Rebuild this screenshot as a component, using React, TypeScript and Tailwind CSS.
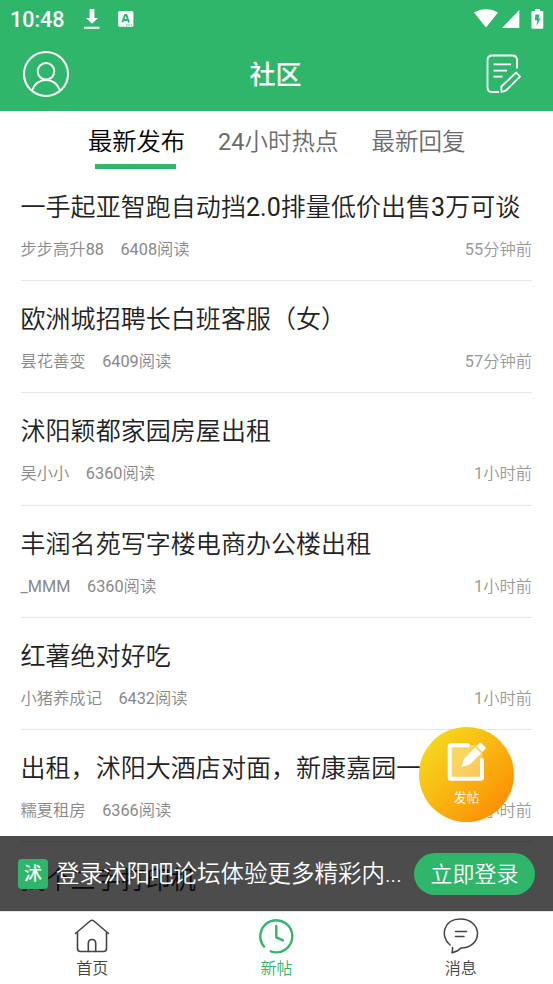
import clsx from "clsx";

const posts = [
  { title: "一手起亚智跑自动挡2.0排量低价出售3万可谈", author: "步步高升88", reads: 6408, time: "55分钟前" },
  { title: "欧洲城招聘长白班客服（女）", author: "昙花善变", reads: 6409, time: "57分钟前" },
  { title: "沭阳颖都家园房屋出租", author: "吴小小", reads: 6360, time: "1小时前" },
  { title: "丰润名苑写字楼电商办公楼出租", author: "_MMM", reads: 6360, time: "1小时前" },
  { title: "红薯绝对好吃", author: "小猪养成记", reads: 6432, time: "1小时前" },
  { title: "出租，沭阳大酒店对面，新康嘉园一楼", author: "糯夏租房", reads: 6366, time: "1小时前" },
  { title: "找个二手打印机", author: "", reads: 0, time: "" },
];

// Latin runs and digits get the regular weight, Chinese stays a bit lighter
function Mixed({ text }: { text: string }) {
  return (
    <>
      {text.split(/([\w.]+)/).map((part, i) =>
        i % 2 ? <span key={i} className="font-normal">{part}</span> : part
      )}
    </>
  );
}

function StatusBar() {
  return (
    <div className="flex h-9 items-center pl-[10px] pr-[9px] pt-[2px] text-white">
      <span className="w-[74px] pt-[2px] text-[21.5px] font-medium leading-none">10:48</span>
      <svg width="16" height="22" viewBox="0 0 16 22" fill="currentColor">
        <path d="M5.600 1h4.800v9H14l-6 5.800L2 10h3.600zM0 18.700h15.500v2H0z" />
      </svg>
      <svg className="ml-[18px]" width="16" height="16" viewBox="0 0 16 16">
        <rect x="0.2" y="0" width="15.2" height="15.8" rx="1.6" fill="currentColor" />
        <path d="M4.400 11.400 7 4h1.400L11 11.400M5.400 9h4.600" fill="none" stroke="#30b66b" strokeWidth="1.9" />
        <path d="M8 14h1.500M10.400 14h1.500M12.800 14h1.200" stroke="#30b66b" strokeWidth="1.2" />
      </svg>
      <div className="ml-auto flex items-center">
        <svg width="24" height="20" viewBox="0 0 24 20" fill="currentColor">
          <path d="M0 3.600C7-.9 17-.9 24 3.600L12 18.600z" />
        </svg>
        <svg className="ml-[4px]" width="18" height="20" viewBox="0 0 18 20" fill="currentColor">
          <path d="M17.300 1v18H0z" />
        </svg>
        <svg className="ml-[11px]" width="13" height="20" viewBox="0 0 13 20">
          <path d="M4 0h5v2h2.500q.8 0 .8.8v16q0 .9-.8.9H1.300q-.8 0-.8-.9v-16Q.5 2 1.300 2H4z" fill="currentColor" />
          <path d="M4.400 5.500h4L7.600 9.500h2L5.500 17.300l.8-6H3.800z" fill="#30b66b" />
        </svg>
      </div>
    </div>
  );
}

function Header() {
  return (
    <header className="h-[111px] shrink-0 bg-[#30b66b] text-white">
      <StatusBar />
      <div className="flex h-[75px] items-center justify-between pl-[23px] pr-[31px]">
        <svg width="46" height="46" viewBox="0 0 46 46" fill="none" stroke="currentColor" strokeWidth="2">
          <circle cx="23" cy="23" r="22" />
          <circle cx="23" cy="20.3" r="8.3" />
          <path d="M9 39.500C14.500 25.500 31.500 25.500 37 39.500" />
        </svg>
        <h1 className="mr-[4px] pt-[2px] text-[26px] font-medium leading-none">社区</h1>
        <svg width="36" height="40" viewBox="0 0 36 40" fill="none" stroke="currentColor" strokeWidth="1.8" strokeLinejoin="round">
          <path d="M31 14.500V6Q31 1.500 26.500 1.500H6Q1.500 1.500 1.500 6V33.500Q1.500 38 6 38H13" />
          <path d="M7.500 10.300H25M7.500 16.600H21M7.500 22.600H16.500" />
          <path d="M15.400 38V32.500L30.200 18.500 34 22.700 19.800 36.700Z" />
        </svg>
      </div>
    </header>
  );
}

function Tabs() {
  return (
    <nav className="flex h-[58px] shrink-0 items-start pl-[88px] pt-[12px] leading-[36px] text-[#6b6b6b]">
      <div className="flex w-[97px] flex-col items-center text-[24.3px] text-black">
        <span className="whitespace-nowrap pt-[1px]">最新发布</span>
        <span className="mt-[4px] mr-[2px] h-[5px] w-[81px] bg-[#30b66b]" />
      </div>
      <span className="ml-[33px] whitespace-nowrap pt-[1px] text-[23.5px]"><Mixed text="24小时热点" /></span>
      <span className="ml-[33px] whitespace-nowrap pt-[1px] text-[23.5px]">最新回复</span>
    </nav>
  );
}

function LoginBar() {
  return (
    <div className="absolute inset-x-0 bottom-0 flex h-[75px] items-center bg-black/70 pl-[18px] pr-[18px] text-white">
      <span className="flex size-[30px] items-center justify-center rounded-[4px] bg-[#30b66b] text-[18px] font-medium leading-none">沭</span>
      <span className="ml-[8px] flex-1 whitespace-nowrap pt-[2px] text-[23.5px]">登录沭阳吧论坛体验更多精彩内...</span>
      <button className="h-[42px] w-[121px] rounded-full bg-[#30b66b] pt-[2px] text-[22px] leading-none">立即登录</button>
    </div>
  );
}

function PostButton() {
  return (
    <button className="absolute right-[39px] bottom-[89px] flex size-[95px] flex-col items-center rounded-full bg-linear-to-br from-[#f2e41f] to-[#fa8200] pt-[15px] text-white">
      <svg width="40" height="40" viewBox="0 0 40 40" fill="none">
        <rect x="2.500" y="3" width="33" height="34" fill="white" fillOpacity="0.32" />
        <path d="M21 3.300H4Q2.700 3.300 2.700 4.600V35.500Q2.700 36.800 4 36.800H33.700Q35 36.800 35 35.500V18" stroke="white" strokeWidth="4" strokeLinecap="round" />
        <path d="M14.200 24.900 17.200 16.500 28.300 5.500 34.300 11.300 22.500 22.700ZM29.500 4.200 32.700 1Q33.500.3 34.300 1L38.500 5.200Q39.200 6 38.500 6.800L35.500 10Z" fill="white" />
      </svg>
      <span className="mt-[7px] text-[12.800px] leading-[18px]">发帖</span>
    </button>
  );
}

function BottomNav() {
  const items = [
    {
      label: "首页",
      icon: (
        <svg width="36" height="36" viewBox="0 0 36 36" fill="none" stroke="currentColor" strokeWidth="1.600" strokeLinejoin="round" strokeLinecap="round">
          <path d="M1.500 15.500 16.200 3Q18 1.500 19.800 3L34.500 15.500M3.500 14V30.500Q3.500 33.500 6.500 33.500H29.500Q32.500 33.500 32.500 30.500V14" />
          <path d="M14.300 33.500V25.500Q14.300 21.500 18 21.500T21.700 25.500V33.500" />
        </svg>
      ),
    },
    {
      label: "新帖",
      active: true,
      icon: (
        <svg width="36" height="36" viewBox="0 0 36 36" fill="none" stroke="currentColor" strokeWidth="2.400" strokeLinecap="round" strokeLinejoin="round">
          <path d="M6 28.500A16 16 0 1 1 12.800 33.300" />
          <path d="M18.300 8V19.300L25 22.300" />
        </svg>
      ),
    },
    {
      label: "消息",
      icon: (
        <svg width="36" height="36" viewBox="0 0 36 36" fill="none" stroke="currentColor" strokeWidth="1.500" strokeLinecap="round" strokeLinejoin="round">
          <path d="M7 27C-3 19 0 1 17.500 1C28 1 34.500 8 34.500 15.500C34.500 24 27.500 30 18 30Q14.500 33.800 9 34.800Q9.700 32.500 9.500 29.500" />
          <path d="M12.500 13.500H23.500M12.500 18.500H21" />
        </svg>
      ),
    },
  ];
  return (
    <nav className="grid h-[73px] shrink-0 grid-cols-3 border-t border-[#e5e5e5] bg-white">
      {items.map((item) => (
        <div key={item.label} className={clsx("flex flex-col items-center pt-[6px]", item.active ? "text-[#30b66b]" : "text-[#444]")}>
          {item.icon}
          <span className="mt-[4px] text-[16px] leading-[22px]">{item.label}</span>
        </div>
      ))}
    </nav>
  );
}

export default function App() {
  return (
    <div className="flex h-[984px] w-[553px] flex-col overflow-hidden bg-white font-[Roboto,'Noto_Sans_CJK_SC',sans-serif] font-[350]">
      <Header />
      <div className="relative flex min-h-0 flex-1 flex-col overflow-hidden">
        <Tabs />
        <main className="pl-[20.500px] pr-[21px]">
          {posts.map((post) => (
            <article key={post.title} className="h-[112.200px] border-b border-[#e6e6e6] pt-[20px]">
              <h2 className="whitespace-nowrap text-[25px] leading-[38px] tracking-[0.05px] text-[#222]"><Mixed text={post.title} /></h2>
              {post.author && (
                <div className="mt-[11px] flex text-[16.300px] leading-[24px] text-[#888]">
                  <span><Mixed text={post.author} /></span>
                  <span className="ml-[16.500px]"><Mixed text={`${post.reads}阅读`} /></span>
                  <span className="ml-auto text-[#999]"><Mixed text={post.time} /></span>
                </div>
              )}
            </article>
          ))}
        </main>
        {/* Floating layers */}
        <PostButton />
        <LoginBar />
      </div>
      <BottomNav />
    </div>
  );
}
